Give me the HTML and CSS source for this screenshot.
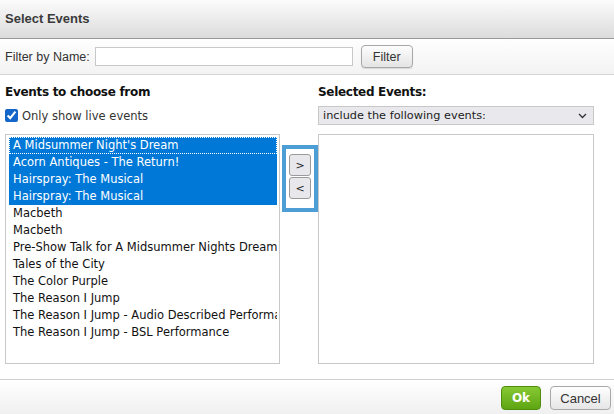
FILE: index.html
```html
<!DOCTYPE html>
<html>
<head>
<meta charset="utf-8">
<link rel="stylesheet" href="styles.css">
</head>
<body>
<div class="dialog">
  <div class="header"><h1 class="title">Select Events</h1></div>
  <div class="filterbar">
    <label class="filter-label">Filter by Name:</label>
    <input class="filter-input" type="text">
    <button class="btn filter-btn">Filter</button>
  </div>
  <div class="main">
    <div class="col col-left">
      <h2 class="col-title">Events to choose from</h2>
      <label class="check-row"><input type="checkbox" class="check" checked><span>Only show live events</span></label>
      <div class="listbox">
        <div class="item sel focus">A Midsummer Night's Dream</div>
        <div class="item sel">Acorn Antiques - The Return!</div>
        <div class="item sel">Hairspray: The Musical</div>
        <div class="item sel">Hairspray: The Musical</div>
        <div class="item">Macbeth</div>
        <div class="item">Macbeth</div>
        <div class="item">Pre-Show Talk for A Midsummer Nights Dream</div>
        <div class="item">Tales of the City</div>
        <div class="item">The Color Purple</div>
        <div class="item">The Reason I Jump</div>
        <div class="item">The Reason I Jump - Audio Described Performance</div>
        <div class="item">The Reason I Jump - BSL Performance</div>
      </div>
    </div>
    <div class="col-mid">
      <div class="movebox">
        <button class="move">&gt;</button>
        <button class="move">&lt;</button>
      </div>
    </div>
    <div class="col col-right">
      <h2 class="col-title">Selected Events:</h2>
      <div class="dropdown">
        <span>include the following events:</span>
        <svg class="chev" width="9" height="6" viewBox="0 0 9 6"><path d="M1 1l3.5 3.5L8 1" fill="none" stroke="#333" stroke-width="1.3"/></svg>
      </div>
      <div class="listbox right-list"></div>
    </div>
  </div>
  <div class="footer">
    <button class="btn ok">Ok</button>
    <button class="btn cancel">Cancel</button>
  </div>
</div>
</body>
</html>
```
FILE: styles.css
```css
* { box-sizing: border-box; }
html, body { margin: 0; padding: 0; }
body { width: 614px; height: 414px; overflow: hidden; background: #fff; font-family: "DejaVu Sans", Verdana, sans-serif; color: #222; }
.dialog { display: flex; flex-direction: column; height: 414px; }

.header { height: 39px; flex: none; background: linear-gradient(#fbfbfb, #dcdcdc); border-bottom: 1px solid #999; display: flex; align-items: center; padding-left: 5px; }
.title { margin: 0; font-family: "Liberation Sans", Arial, sans-serif; font-weight: bold; font-size: 13px; color: #3a3a3a; position: relative; top: -1px; }

.filterbar { height: 36px; flex: none; background: linear-gradient(#fefefe, #f3f3f3); border-bottom: 1px solid #d4d4d4; display: flex; align-items: center; padding-left: 5px; }
.filter-label { font-family: "Liberation Sans", Arial, sans-serif; font-size: 12.5px; color: #333; }
.filter-input { margin: 0 0 0 5px; width: 258px; height: 19px; border: 1px solid #c8c8c8; background: #fff; padding: 0 3px; }
.btn { font-family: "Liberation Sans", Arial, sans-serif; cursor: pointer; }
.filter-btn { margin-left: 8px; width: 52px; height: 23px; border: 1px solid #a8a8a8; border-radius: 4px; background: linear-gradient(#fdfdfd, #e4e4e4); font-size: 12.5px; color: #333; padding: 0; box-shadow: 0 1px 1px rgba(0,0,0,0.12); }

.main { flex: 1; display: flex; padding: 0 0 0 5px; }
.col { width: 276px; display: flex; flex-direction: column; }
.col-title { margin: 10px 0 0 0; font-size: 12px; font-weight: bold; line-height: 14px; color: #111; font-family: "DejaVu Sans", Verdana, sans-serif; letter-spacing: -0.3px; }
.check-row { display: flex; align-items: center; margin-top: 9px; font-size: 11.5px; color: #333; height: 15px; }
.check { margin: 0 4px 0 0; width: 13px; height: 13px; accent-color: #1467c8; }
.listbox { border: 1px solid #c8c8c8; height: 230px; overflow: hidden; padding: 2px 2px 1px 3px; }
.col-left .listbox { margin-top: 11px; width: 275px; }
.item { height: 17px; line-height: 17px; font-size: 11.5px; padding-left: 4px; white-space: nowrap; overflow: hidden; color: #111; }
.item.sel { background: #0078d7; color: #fff; }
.item.focus { outline: 1px dotted #fff; outline-offset: -1px; }

.col-mid { width: 37px; flex: none; padding-top: 70px; display: flex; justify-content: center; padding-left: 1px; }
.movebox { width: 36px; height: 67px; border: 4px solid #4d9ed4; background: #fff; display: flex; flex-direction: column; align-items: center; padding-top: 5px; gap: 1px; }
.move { width: 22px; height: 22px; border: 1px solid #9a9a9a; border-radius: 3px; background: #e8e8ec; font-family: "DejaVu Sans", sans-serif; font-size: 11px; color: #222; padding: 0; }

.col-right { width: 276px; }
.dropdown { margin-top: 7px; height: 19px; border: 1px solid #c8c8c8; background: #e9e9ed; display: flex; align-items: center; justify-content: space-between; padding: 0 6px 0 4px; font-size: 11.3px; color: #222; }
.right-list { margin-top: 9px; }

.footer { height: 35px; flex: none; border-top: 1px solid #cfcfcf; background: linear-gradient(#ffffff, #f0f0f0); display: flex; align-items: center; justify-content: flex-end; padding: 2px 3px 0 0; gap: 9px; }
.ok { width: 40px; height: 24px; border: 1px solid #4e8d0e; border-radius: 4px; background: linear-gradient(#86c934, #5ea512); color: #fff; font-weight: bold; font-family: "DejaVu Sans", Verdana, sans-serif; font-size: 12px; padding: 0; }
.cancel { width: 61px; height: 24px; border: 1px solid #a8a8a8; border-radius: 4px; background: linear-gradient(#fefefe, #e6e6e6); color: #333; font-size: 13px; padding: 0; }
```
